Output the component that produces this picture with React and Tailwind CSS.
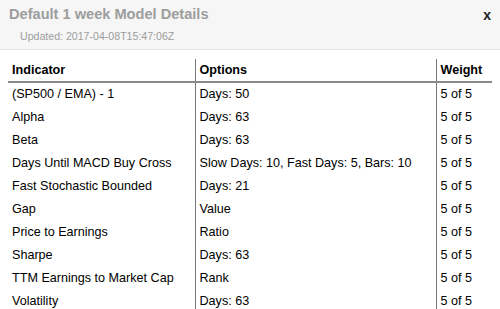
const rows = [
  ['(SP500 / EMA) - 1', 'Days: 50', '5 of 5'],
  ['Alpha', 'Days: 63', '5 of 5'],
  ['Beta', 'Days: 63', '5 of 5'],
  ['Days Until MACD Buy Cross', 'Slow Days: 10, Fast Days: 5, Bars: 10', '5 of 5'],
  ['Fast Stochastic Bounded', 'Days: 21', '5 of 5'],
  ['Gap', 'Value', '5 of 5'],
  ['Price to Earnings', 'Ratio', '5 of 5'],
  ['Sharpe', 'Days: 63', '5 of 5'],
  ['TTM Earnings to Market Cap', 'Rank', '5 of 5'],
  ['Volatility', 'Days: 63', '5 of 5'],
]

export default function App() {
  return (
    <div className="w-[500px] h-[309px] overflow-hidden bg-white font-['Liberation_Sans',Arial,sans-serif]">
      <div className="h-[50px] bg-[#f6f6f6] border-b border-[#e6e6e6] flex justify-between pl-[9px] pr-[9px]">
        <div>
          <div className="pt-[6px] text-[14.6px] leading-[17px] font-bold text-[#9d9d9d]">
            Default 1 week Model Details
          </div>
          <div className="pt-[7px] pl-[11px] text-[10.6px] leading-[13px] text-[#9d9d9d]">
            Updated: 2017-04-08T15:47:06Z
          </div>
        </div>
        <div className="pt-[7px] text-[14px] leading-[16px] font-bold text-[#222]">x</div>
      </div>
      <table className="ml-[8px] mt-[9px] w-[484px] border-collapse text-[12.6px] text-black table-fixed">
        <colgroup>
          <col className="w-[187px]" />
          <col className="w-[241px]" />
          <col />
        </colgroup>
        <thead>
          <tr className="h-[23px] border-b-2 border-[#8a8a8a]">
            <th className="text-left font-bold pl-[4px] pt-[1px]">Indicator</th>
            <th className="text-left font-bold pl-[4px] pt-[1px] border-l border-[#777]">Options</th>
            <th className="text-left font-bold pl-[4px] pt-[1px] border-l border-[#777]">Weight</th>
          </tr>
        </thead>
        <tbody>
          {rows.map((r) => (
            <tr key={r[0]} className="h-[23px]">
              <td className="pl-[4px] pt-[1px] whitespace-nowrap">{r[0]}</td>
              <td className="pl-[4px] pt-[1px] border-l border-[#777] whitespace-nowrap">{r[1]}</td>
              <td className="pl-[4px] pt-[1px] border-l border-[#777] whitespace-nowrap">{r[2]}</td>
            </tr>
          ))}
        </tbody>
      </table>
    </div>
  )
}
